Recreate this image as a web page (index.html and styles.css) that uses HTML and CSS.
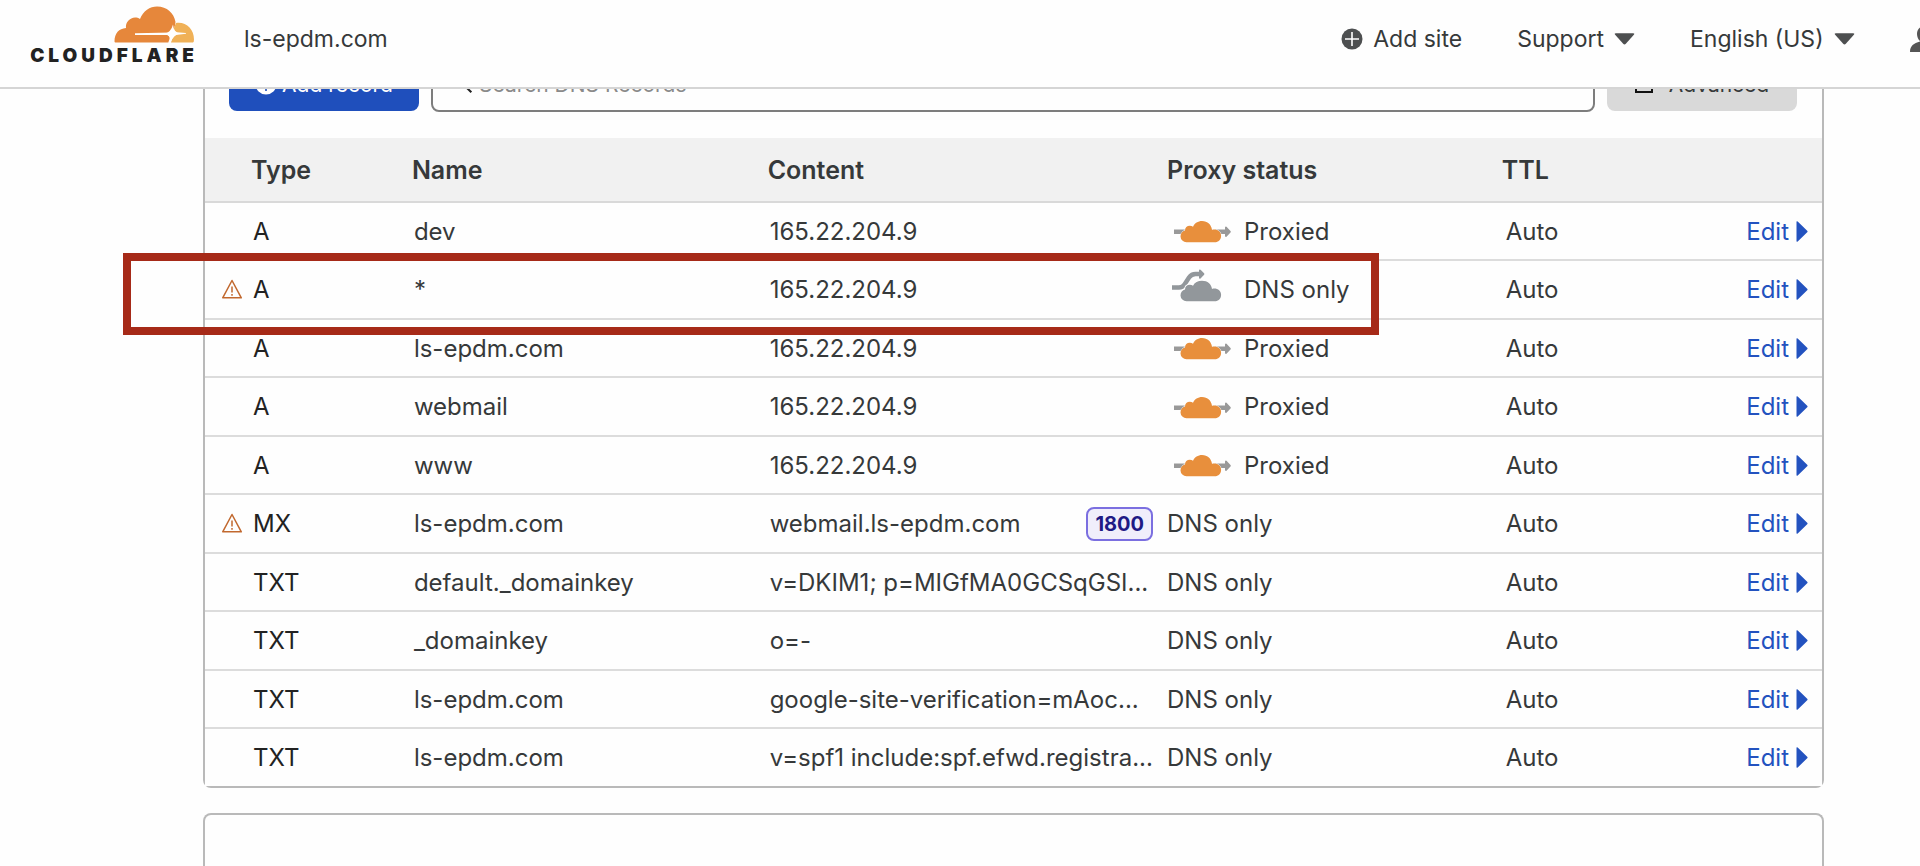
FILE: index.html
```html
<!DOCTYPE html>
<html lang="en">
<head>
<meta charset="utf-8">
<title>DNS records | ls-epdm.com</title>
<link rel="stylesheet" href="styles.css">
</head>
<body>
<svg class="sprite" aria-hidden="true">
  <symbol id="plus" viewBox="0 0 22 22"><circle cx="11" cy="11" r="10.5" fill="currentColor"/><path d="M11 4v14M4 11h14" stroke="var(--plus)" stroke-width="1.600"/></symbol>
  <symbol id="down" viewBox="0 0 22 12"><path d="M2 0h18q2 0 .8 1.600l-8.400 9.400q-1.400 1.400-2.800 0L1.200 1.600Q0 0 2 0z" fill="currentColor"/></symbol>
  <symbol id="right" viewBox="0 0 12 21"><path d="M.5 1q0-1.500 1.200-.4l9.500 9.100q.8.800 0 1.600l-9.500 9.100q-1.200 1-1.200-.4z" fill="currentColor"/></symbol>
  <symbol id="warn" viewBox="0 0 22 20"><path d="M11 1.500 20.300 18.800H1.700z" fill="none" stroke="currentColor" stroke-width="1.500" stroke-linejoin="round"/><path d="M11 7.500v6M11 15v1.800" stroke="currentColor" stroke-width="1.500"/></symbol>
  <symbol id="proxied" viewBox="0 0 60 42"><path d="M2 19.500H53v-2q.5-1.500 1.500-.7l4 4.100q.7.800 0 1.600l-4 4.200q-1 .8-1.500-.7v-2H2z" fill="#999"/><path d="M14.500 32.300a6 6 0 0 1-6-5.800c0-3 2-5.500 4.500-6 0-3 2-4.700 4.800-4.700 1.300 0 2.300.3 3.200.9C22.600 13.200 26 11 30 11c5.600 0 9.500 3.800 10 9 .7-.4 1.500-.5 2.200-.5 4 0 6.900 2.700 6.900 6.300 0 4-2.600 6.500-6.500 6.500z" fill="#e88f3c" stroke="#fff" stroke-width="1" paint-order="stroke"/></symbol>
  <symbol id="direct" viewBox="0 0 60 42"><path d="M0 18.500H7Q10.500 18.500 12.500 15.500L17 8.500Q19.500 5 23.500 5H28" fill="none" stroke="#92979b" stroke-width="4.500"/><path d="M27 1q.4-1 1.500-.3l3.600 3.600q.6.700 0 1.400l-3.600 3.800Q27.400 10.200 27 9z" fill="#92979b"/><path d="M14.500 32.300a6 6 0 0 1-6-5.800c0-3 2-5.500 4.500-6 0-3 2-4.700 4.800-4.700 1.300 0 2.300.3 3.200.9C22.600 13.500 26 11.800 30 11.800c5.600 0 9.500 3.500 10 8.200.7-.4 1.500-.5 2.200-.5 4 0 6.900 2.700 6.900 6.300 0 4-2.600 6.500-6.500 6.500z" fill="#92979b" stroke="#fff" stroke-width="1.500" paint-order="stroke"/></symbol>
</svg>

<header class="topbar">
  <a class="logo" href="#" aria-label="Cloudflare home">
    <svg class="logo-cloud" viewBox="0 0 80 37" aria-hidden="true">
      <path d="M1.500 36.500Q.5 36.500.5 35.500C.5 27 5 22.500 12 22c-1-7 7-13.500 14-9C29 5 36 .5 43 .5c10 0 17 6.500 18.500 15.500-.5 5-2 8.500-4.500 10.500l-36 .8v1.700h32c2 .5 3 2 2.500 4l-1.200 3.500z" fill="#e6873b"/>
      <path d="M62 17C72 15.500 80 23 80 33.500q0 3-1.200 3H57c1-4 2-6 5-7.500l10-1.200v-.8l-9-.7c-2.500-1-3.500-3-2.800-5z" fill="#f0b157"/>
      <path d="M59 18.500q.5 7.800 6 9-5 1.500-8 8-.5-6-6-8 6-1.500 8-9z" fill="#fff"/>
    </svg>
    <span class="wordmark">CLOUDFLARE</span>
  </a>
  <span class="zone">ls-epdm.com</span>
  <nav class="topnav">
    <a class="nav-item add-site" href="#"><svg class="ico-plus"><use href="#plus"/></svg>Add site</a>
    <button class="nav-item" type="button" aria-haspopup="menu">Support<svg class="ico-down"><use href="#down"/></svg></button>
    <label class="nav-item language"><select aria-label="Language"><option>English (US)</option></select><svg class="ico-down"><use href="#down"/></svg></label>
    <button class="user" type="button" aria-label="Account"><svg viewBox="0 0 30 26"><path d="M15 0c5 0 8 3.500 8 8 0 3-1.500 6-3.500 7.500C26 17 30 20 30 26H0c0-6 4-9 10.500-10.500C8.500 14 7 11 7 8c0-4.500 3-8 8-8z" fill="currentColor"/></svg></button>
  </nav>
</header>

<main>
  <section class="panel">
    <div class="toolbar">
      <button class="btn add" type="button"><svg class="ico-plus"><use href="#plus"/></svg>Add record</button>
      <label class="search"><svg viewBox="0 0 24 24"><circle cx="9" cy="9" r="7" fill="none" stroke="currentColor" stroke-width="2"/><path d="M14 14l8 8" stroke="currentColor" stroke-width="2.500"/></svg><input type="search" placeholder="Search DNS Records" aria-label="Search DNS Records"></label>
      <button class="btn advanced" type="button"><svg viewBox="0 0 18 18"><path d="M1 1h16v16H1z" fill="none" stroke="currentColor" stroke-width="2"/></svg>Advanced</button>
    </div>
    <table class="records">
      <colgroup><col class="c-type"><col class="c-name"><col class="c-content"><col class="c-proxy"><col class="c-ttl"><col></colgroup>
      <thead>
        <tr><th class="type">Type</th><th>Name</th><th>Content</th><th>Proxy status</th><th>TTL</th><th aria-label="Actions"></th></tr>
      </thead>
      <tbody>
        <tr><td class="type">A</td><td>dev</td><td>165.22.204.9</td><td class="proxy"><span class="status"><svg class="ico-cloud"><use href="#proxied"/></svg>Proxied</span></td><td class="ttl">Auto</td><td class="action"><a href="#">Edit<svg class="ico-right"><use href="#right"/></svg></a></td></tr>
        <tr class="marked"><td class="type"><svg class="ico-warn"><use href="#warn"/></svg>A<span class="marker"></span></td><td>*</td><td>165.22.204.9</td><td class="proxy"><span class="status"><svg class="ico-cloud"><use href="#direct"/></svg>DNS only</span></td><td class="ttl">Auto</td><td class="action"><a href="#">Edit<svg class="ico-right"><use href="#right"/></svg></a></td></tr>
        <tr><td class="type">A</td><td>ls-epdm.com</td><td>165.22.204.9</td><td class="proxy"><span class="status"><svg class="ico-cloud"><use href="#proxied"/></svg>Proxied</span></td><td class="ttl">Auto</td><td class="action"><a href="#">Edit<svg class="ico-right"><use href="#right"/></svg></a></td></tr>
        <tr><td class="type">A</td><td>webmail</td><td>165.22.204.9</td><td class="proxy"><span class="status"><svg class="ico-cloud"><use href="#proxied"/></svg>Proxied</span></td><td class="ttl">Auto</td><td class="action"><a href="#">Edit<svg class="ico-right"><use href="#right"/></svg></a></td></tr>
        <tr><td class="type">A</td><td>www</td><td>165.22.204.9</td><td class="proxy"><span class="status"><svg class="ico-cloud"><use href="#proxied"/></svg>Proxied</span></td><td class="ttl">Auto</td><td class="action"><a href="#">Edit<svg class="ico-right"><use href="#right"/></svg></a></td></tr>
        <tr><td class="type"><svg class="ico-warn"><use href="#warn"/></svg>MX</td><td>ls-epdm.com</td><td><span class="mx">webmail.ls-epdm.com<span class="badge">1800</span></span></td><td class="proxy">DNS only</td><td class="ttl">Auto</td><td class="action"><a href="#">Edit<svg class="ico-right"><use href="#right"/></svg></a></td></tr>
        <tr><td class="type">TXT</td><td>default._domainkey</td><td>v=DKIM1; p=MIGfMA0GCSqGSI...</td><td class="proxy">DNS only</td><td class="ttl">Auto</td><td class="action"><a href="#">Edit<svg class="ico-right"><use href="#right"/></svg></a></td></tr>
        <tr><td class="type">TXT</td><td>_domainkey</td><td>o=-</td><td class="proxy">DNS only</td><td class="ttl">Auto</td><td class="action"><a href="#">Edit<svg class="ico-right"><use href="#right"/></svg></a></td></tr>
        <tr><td class="type">TXT</td><td>ls-epdm.com</td><td>google-site-verification=mAoc...</td><td class="proxy">DNS only</td><td class="ttl">Auto</td><td class="action"><a href="#">Edit<svg class="ico-right"><use href="#right"/></svg></a></td></tr>
        <tr><td class="type">TXT</td><td>ls-epdm.com</td><td>v=spf1 include:spf.efwd.registra...</td><td class="proxy">DNS only</td><td class="ttl">Auto</td><td class="action"><a href="#">Edit<svg class="ico-right"><use href="#right"/></svg></a></td></tr>
      </tbody>
    </table>
  </section>
  <section class="panel next"></section>
</main>
</body>
</html>
```
FILE: styles.css
```css
* { box-sizing: border-box; }

body {
  margin: 0;
  height: 100vh;
  display: flex;
  flex-direction: column;
  overflow: hidden;
  background: #fefefe;
  color: #36393a;
  font-family: Inter, "Liberation Sans", sans-serif;
  font-size: 24px;
}

a { color: inherit; text-decoration: none; }
button, select, input { font: inherit; color: inherit; border: 0; padding: 0; background: none; }
svg { display: block; flex: none; }
.sprite { position: absolute; width: 0; height: 0; }

.topbar {
  flex: none;
  display: flex;
  align-items: center;
  height: 89px;
  padding: 0 0 10px 27px;
  border-bottom: 2px solid #d5d5d5;
  font-size: 23px;
  white-space: nowrap;
}

.logo {
  display: flex;
  flex-direction: column;
  align-items: flex-end;
  gap: 4px;
  width: 167px;
  margin-bottom: 18px;
  margin-top: 12px;
}
.logo-cloud { width: 80px; height: 37px; }
.wordmark {
  margin-right: -4px;
  color: #222;
  font-size: 19px;
  font-weight: 900;
  line-height: 18px;
  letter-spacing: 4px;
}
.zone { margin-left: 50px; }

.topnav {
  display: flex;
  align-items: center;
  gap: 55px;
  margin-left: auto;
  margin-right: -20px;
}
.nav-item { display: flex; align-items: center; gap: 10px; }
.nav-item svg { color: #4d4f50; }
.ico-plus { width: 22px; height: 22px; --plus: #fff; }
.ico-down { width: 21px; height: 12px; }
.language select { appearance: none; }
.user svg { width: 30px; height: 26px; color: #555; }

main {
  flex: 1;
  display: flex;
  flex-direction: column;
  gap: 25px;
  overflow: hidden;
  padding: 0 96px 0 203px;
}

.panel {
  border: 2px solid #b9b9b9;
  border-top: 0;
  border-radius: 0 0 8px 8px;
}
.next {
  flex: 1;
  border-top: 2px solid #b9b9b9;
  border-bottom: 0;
  border-radius: 8px 8px 0 0;
}

.toolbar {
  display: flex;
  align-items: center;
  gap: 12px;
  height: 56px;
  margin: -33px 25px 26px 24px;
  font-size: 21px;
}
.btn {
  display: flex;
  align-items: center;
  justify-content: center;
  width: 190px;
  height: 53px;
  border-radius: 8px;
}
.add { gap: 5px; background: #1f4fbc; color: #fff; }
.add .ico-plus { --plus: #1f4fbc; }
.advanced { gap: 16px; background: #d9d9d9; }
.advanced svg { width: 18px; height: 18px; color: #111; }
.search {
  flex: 1;
  display: flex;
  align-items: center;
  gap: 6px;
  height: 56px;
  padding: 0 20px;
  border: 2px solid #7d7d7d;
  border-radius: 8px;
}
.search svg { width: 20px; height: 20px; color: #222; }
.search input { flex: 1; outline: 0; }
.search input::placeholder { color: #8a8a8a; opacity: 1; }

.records {
  width: 100%;
  table-layout: fixed;
  border-collapse: separate;
  border-spacing: 0;
  background: #fefefe;
  white-space: nowrap;
}
.c-type { width: 12.3%; }
.c-name { width: 22%; }
.c-content { width: 24.7%; }
.c-proxy { width: 20.7%; }
.c-ttl { width: 10%; }

th {
  height: 65px;
  padding: 0 6px 0 8px;
  background: #f1f1f1;
  border-bottom: 2px solid #d9d9d9;
  text-align: left;
  font-size: 25px;
  font-weight: 600;
}
th.type { padding-left: 46px; }

td {
  height: 58px;
  padding: 0 6px 0 10px;
  border-bottom: 2px solid #dcdcdc;
}
tbody tr:nth-child(even) td { height: 59px; }
tbody tr:last-child td { height: 57px; border-bottom: 0; }
td.type { padding-left: 48px; color: #222; }
td.proxy { padding-left: 8px; }
td.ttl { padding-left: 12px; }
td.action { padding-right: 14px; color: #2352bf; }
.action a { display: flex; align-items: center; justify-content: flex-end; gap: 7px; }
.ico-right { width: 12px; height: 21px; }

.ico-warn {
  float: left;
  width: 22px;
  height: 20px;
  margin: 4px 10px 0 -32px;
  color: #c1682e;
}
.status { display: flex; align-items: center; gap: 12px; }
.ico-cloud { width: 60px; height: 42px; margin-left: 5px; }
.mx { display: flex; align-items: center; justify-content: space-between; }
.badge {
  padding: 0 7px;
  border: 2px solid #7b6fe0;
  border-radius: 8px;
  background: #f0eefb;
  color: #1f1a85;
  font-size: 20px;
  font-weight: 700;
  line-height: 30px;
}

.marked { position: relative; }
.marker {
  position: absolute;
  top: -8px;
  right: 443px;
  bottom: -15px;
  left: -82px;
  border: 8px solid #a62a18;
  pointer-events: none;
}
```
